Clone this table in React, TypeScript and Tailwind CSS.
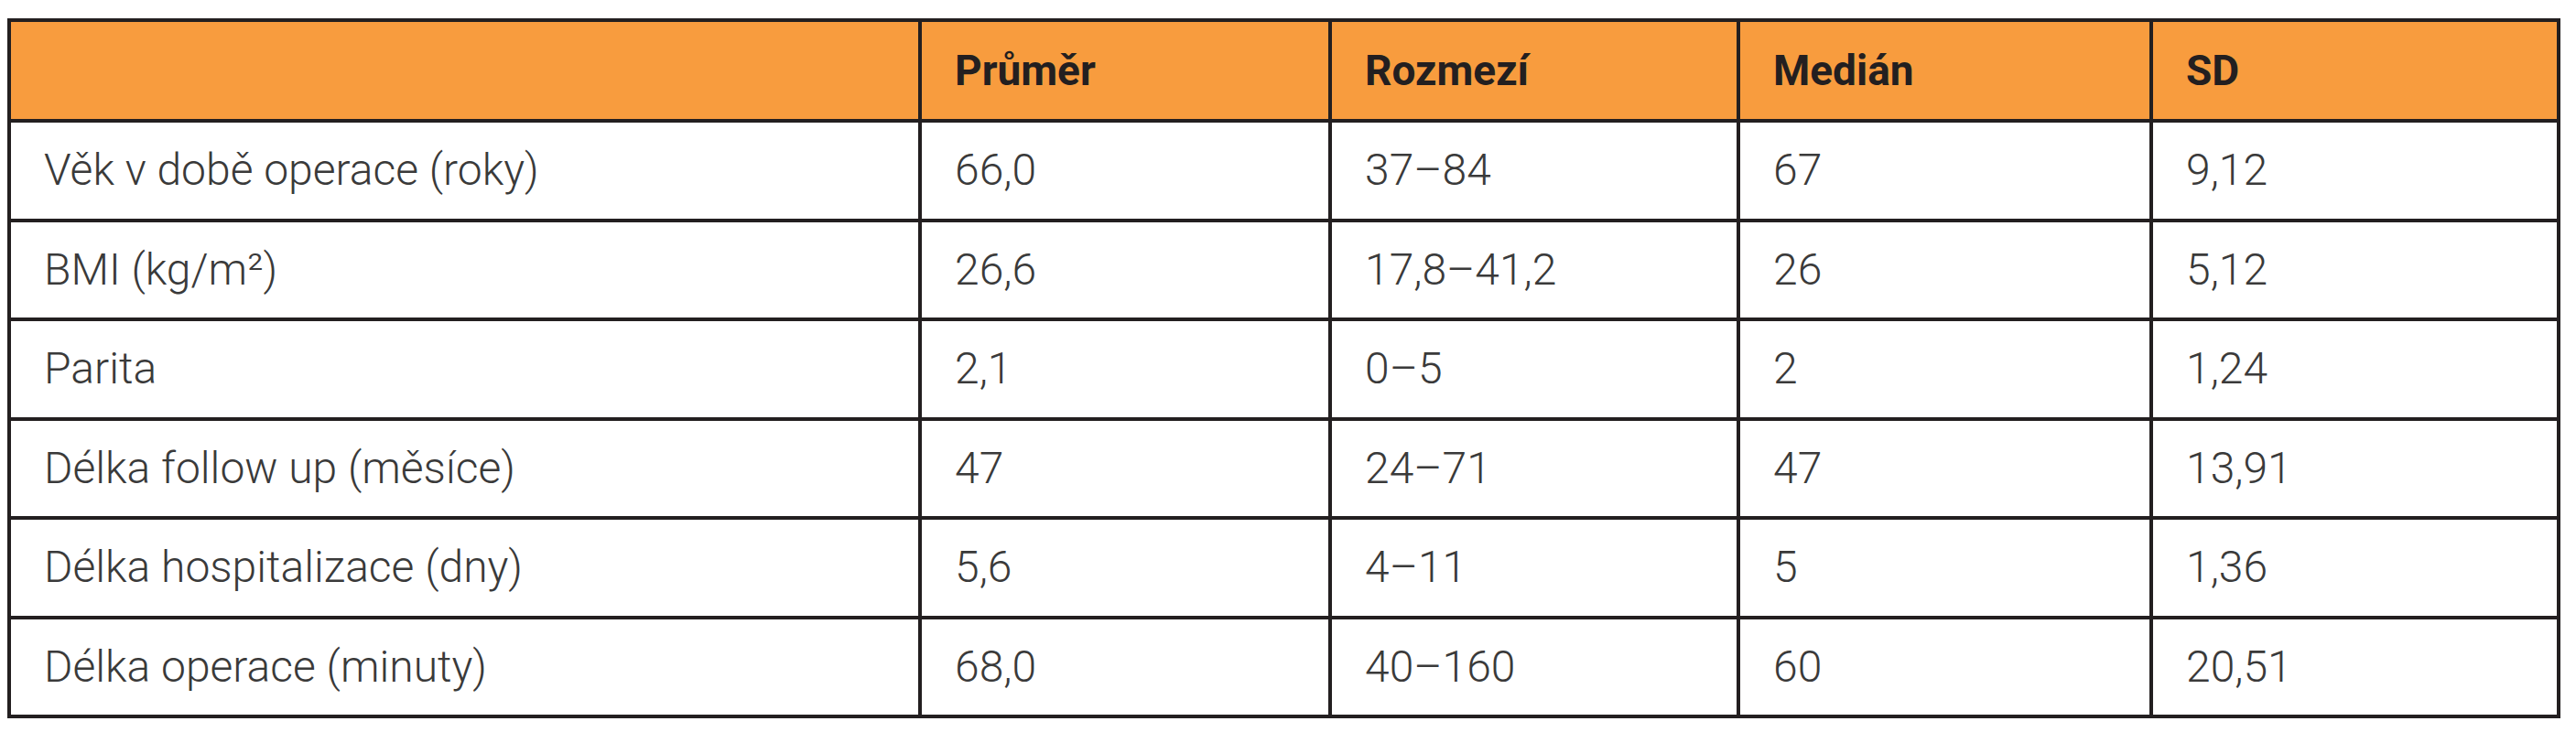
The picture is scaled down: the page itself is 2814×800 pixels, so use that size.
import React from "react";

const rows = [
  ["Věk v době operace (roky)", "66,0", "37–84", "67", "9,12"],
  ["BMI (kg/m²)", "26,6", "17,8–41,2", "26", "5,12"],
  ["Parita", "2,1", "0–5", "2", "1,24"],
  ["Délka follow up (měsíce)", "47", "24–71", "47", "13,91"],
  ["Délka hospitalizace (dny)", "5,6", "4–11", "5", "1,36"],
  ["Délka operace (minuty)", "68,0", "40–160", "60", "20,51"],
];

const headers = ["", "Průměr", "Rozmezí", "Medián", "SD"];

export default function App() {
  return (
    <div className="w-[2814px] h-[800px] bg-white pt-5 pl-2 [font-family:Roboto,'Liberation_Sans',sans-serif]">
      <table className="table-fixed border-collapse w-[2789px] border-4 border-[#231f20]">
        <colgroup>
          <col className="w-[995px]" />
          <col className="w-[448px]" />
          <col className="w-[446px]" />
          <col className="w-[451px]" />
          <col className="w-[445px]" />
        </colgroup>
        <thead>
          <tr className="h-[110px] bg-[#f89c3e]">
            {headers.map((h, i) => (
              <th
                key={i}
                className="border-4 border-[#231f20] pl-9 text-left align-middle text-[46px] font-bold leading-none text-[#231f20]"
              >
                {h}
              </th>
            ))}
          </tr>
        </thead>
        <tbody>
          {rows.map((row, r) => (
            <tr key={r} className="h-[108.5px]">
              {row.map((cell, c) => (
                <td
                  key={c}
                  className="border-4 border-[#231f20] pl-9 text-left align-middle text-[48px] font-light leading-none text-[#3a3a3a]"
                >
                  {cell}
                </td>
              ))}
            </tr>
          ))}
        </tbody>
      </table>
    </div>
  );
}
